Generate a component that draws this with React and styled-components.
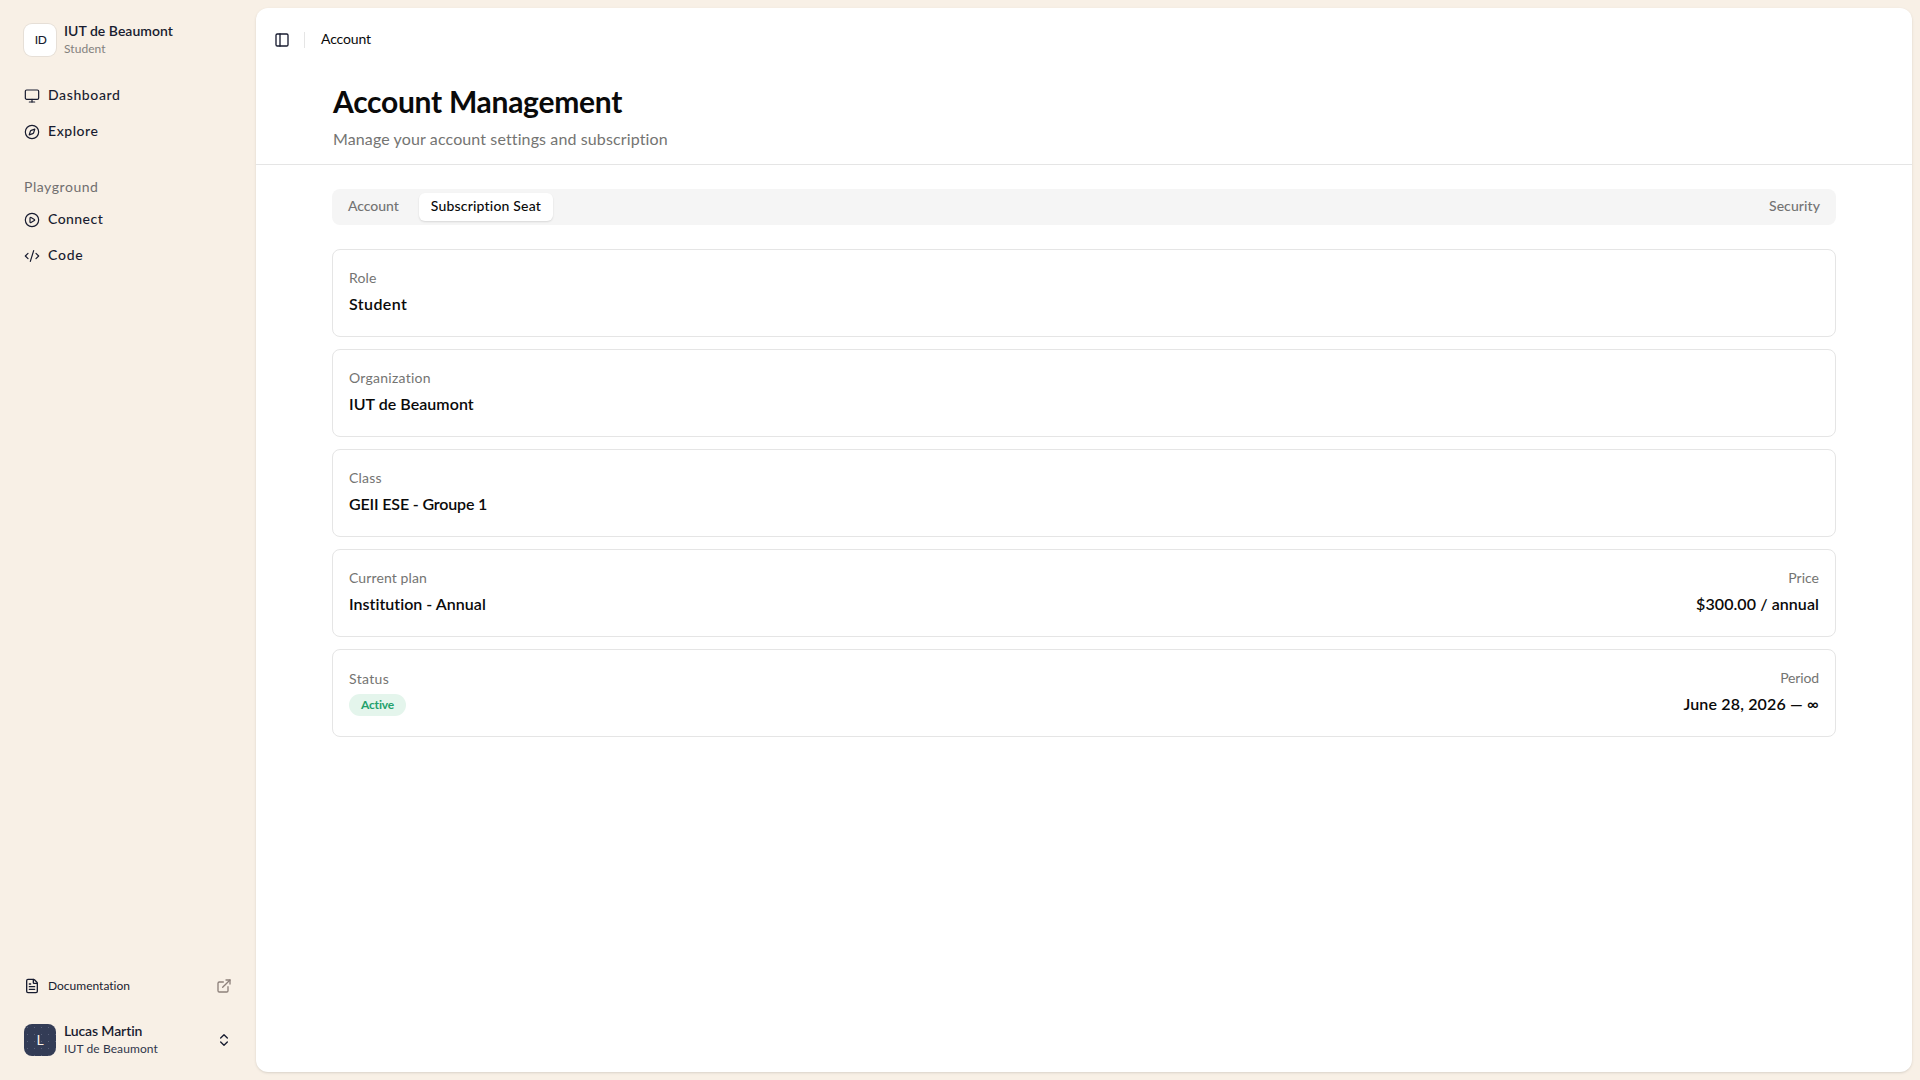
import React from "react";
import styled, { createGlobalStyle } from "styled-components";
import {
  ChevronsUpDown,
  CirclePlay,
  CodeXml,
  Compass,
  ExternalLink,
  FileText,
  Monitor,
  PanelLeft,
} from "lucide-react";

const mainNav = [
  { label: "Dashboard", Icon: Monitor, track: 0.62 },
  { label: "Explore", Icon: Compass, track: 0.55 },
];

const playgroundNav = [
  { label: "Connect", Icon: CirclePlay, track: 0.45 },
  { label: "Code", Icon: CodeXml, track: 0.75 },
];

const rows = [
  [{ label: "Role", value: "Student", labelTrack: 0.15, valueTrack: 0.4 }],
  [{ label: "Organization", value: "IUT de Beaumont", labelTrack: 0.26, valueTrack: 0.05 }],
  [{ label: "Class", value: "GEII ESE - Groupe 1", labelTrack: 0.21, valueTrack: -0.16 }],
  [
    { label: "Current plan", value: "Institution - Annual", labelTrack: 0.12, valueTrack: 0.03 },
    { label: "Price", value: "$300.00 / annual", labelTrack: 0, valueTrack: 0.08 },
  ],
  [
    { label: "Status", badge: "Active", labelTrack: 0.35, valueTrack: -0.16 },
    { label: "Period", value: "June 28, 2026 — ∞", labelTrack: -0.15, valueTrack: 0.16 },
  ],
];

function NavItem({ label, Icon, track }) {
  return (
    <NavLink href="#">
      <Icon size={16} strokeWidth={1.8} />
      <NavText $track={track}>{label}</NavText>
    </NavLink>
  );
}

function Field({ field, end }) {
  return (
    <FieldBox $end={end}>
      <FieldLabel $track={field.labelTrack} $low={!!field.badge}>{field.label}</FieldLabel>
      {field.badge ? (
        <Badge $track={field.valueTrack}>{field.badge}</Badge>
      ) : (
        <FieldValue $track={field.valueTrack}>{field.value}</FieldValue>
      )}
    </FieldBox>
  );
}

export default function App() {
  return (
    <Page>
      <GlobalStyle />
      <Sidebar>
        <Identity>
          <OrgLogo>ID</OrgLogo>
          <IdentityText>
            <Name $track={0.03}>IUT de Beaumont</Name>
            <Detail $muted $track={0.05}>Student</Detail>
          </IdentityText>
        </Identity>

        <Nav>
          {mainNav.map((item) => <NavItem key={item.label} {...item} />)}
        </Nav>

        <NavTitle>Playground</NavTitle>
        <Nav>
          {playgroundNav.map((item) => <NavItem key={item.label} {...item} />)}
        </Nav>

        <SidebarFooter>
          <DocLink href="#">
            <FileText size={16} />
            <span>Documentation</span>
            <ExternalLink size={16} />
          </DocLink>
          <Identity>
            <Avatar>
              <AvatarDots />
              <AvatarLetter>L</AvatarLetter>
            </Avatar>
            <IdentityText>
              <Name $track={-0.12}>Lucas Martin</Name>
              <Detail $track={0.11}>IUT de Beaumont</Detail>
            </IdentityText>
            <ChevronsUpDown size={16} />
          </Identity>
        </SidebarFooter>
      </Sidebar>

      <Main>
        <TopBar>
          <PanelLeft size={16} />
          <Separator />
          <Crumb>Account</Crumb>
        </TopBar>

        <Header>
          <Title>Account Management</Title>
          <Subtitle>Manage your account settings and subscription</Subtitle>
        </Header>

        <Content>
          <Tabs>
            <Tab $track={-0.05}>Account</Tab>
            <Tab $active $track={0.19}>Subscription Seat</Tab>
            <Tab $end $track={0.08}>Security</Tab>
          </Tabs>
          {rows.map((fields) => (
            <Card key={fields[0].label}>
              {fields.map((field, i) => <Field key={field.label} field={field} end={i > 0} />)}
            </Card>
          ))}
        </Content>
      </Main>
    </Page>
  );
}

const GlobalStyle = createGlobalStyle`
* {
  box-sizing: border-box;
}
body {
  margin: 0;
  background: #f8f0e6;
  color: #0a0a0a;
  font-family: Lato, "Liberation Sans", sans-serif;
  font-variant-ligatures: none;
}
`;

const Page = styled.div`
display: flex;
height: 100vh;
background: #f8f0e6;
`;

const Sidebar = styled.aside`
display: flex;
flex: none;
flex-direction: column;
width: 256px;
padding: 16px;
color: #181c30;
`;

const Identity = styled.div`
display: flex;
align-items: center;
gap: 8px;
height: 48px;
padding: 0 8px;

> svg {
  flex: none;
}
`;

const OrgLogo = styled.div`
display: flex;
align-items: center;
justify-content: center;
width: 32px;
height: 32px;
padding: 0 0 1px 1px;
border-radius: 8px;
background: #fff;
box-shadow: 0 0 0 1px #e6dfd7;
font-size: 12px;
font-weight: 500;
letter-spacing: -0.5px;
`;

const IdentityText = styled.div`
display: flex;
flex: 1;
flex-direction: column;
`;

const Name = styled.span`
font-size: 14px;
font-weight: 600;
line-height: 16px;
letter-spacing: ${(p) => p.$track}px;
`;

const Detail = styled.span`
padding-top: 2px;
font-size: 12px;
line-height: 16px;
letter-spacing: ${(p) => p.$track}px;
color: ${(p) => (p.$muted ? "#84817e" : "#30364b")};
`;

const Nav = styled.nav`
display: flex;
flex-direction: column;
gap: 4px;

${Identity} + & {
  margin-top: 16px;
}
`;

const NavLink = styled.a`
display: flex;
align-items: center;
gap: 8px;
height: 32px;
padding: 0 8px;
color: inherit;
text-decoration: none;
`;

const NavText = styled.span`
padding-bottom: 2px;
font-size: 14px;
font-weight: 500;
line-height: 20px;
letter-spacing: ${(p) => p.$track}px;
`;

const NavTitle = styled.div`
height: 32px;
margin-top: 24px;
padding: 0 8px;
color: #716f70;
font-size: 14px;
line-height: 30px;
letter-spacing: 0.55px;
`;

const SidebarFooter = styled.div`
display: flex;
flex-direction: column;
gap: 14px;
margin-top: auto;
`;

const DocLink = styled.a`
display: flex;
align-items: center;
gap: 8px;
height: 32px;
padding: 0 8px;
color: inherit;
font-size: 12px;
text-decoration: none;

span {
  flex: 1;
  padding-bottom: 2px;
}

svg:last-child {
  color: #8d817b;
}
`;

const Avatar = styled.div`
position: relative;
width: 32px;
height: 32px;
border-radius: 8px;
background: #333c56;
overflow: hidden;
`;

const AvatarDots = styled.div`
height: 100%;
background-image: radial-gradient(circle, #59617a 0.6px, transparent 0.9px);
background-size: 7px 7px;
`;

const AvatarLetter = styled.span`
position: absolute;
inset: 0;
color: #f8f0e6;
font-size: 14px;
line-height: 31px;
text-align: center;
`;

const Main = styled.main`
flex: 1;
margin: 8px 8px 8px 0;
border-radius: 12px;
background: #fff;
box-shadow: 0 1px 3px rgba(0, 0, 0, 0.1), 0 1px 2px -1px rgba(0, 0, 0, 0.1);
`;

const TopBar = styled.div`
display: flex;
align-items: center;
height: 64px;
padding-left: 18px;
color: #181c30;
`;

const Separator = styled.div`
width: 1px;
height: 16px;
margin: 0 16px 0 14px;
background: #e5e5e5;
`;

const Crumb = styled.span`
padding-bottom: 3px;
color: #0a0a0a;
font-size: 14px;
letter-spacing: -0.15px;
`;

const Header = styled.header`
height: 93px;
padding: 11px 77px 0;
border-bottom: 1px solid #e5e5e5;
`;

const Title = styled.h1`
margin: 0;
font-size: 30px;
font-weight: 700;
line-height: 36px;
letter-spacing: -0.28px;
`;

const Subtitle = styled.p`
margin: 8px 0 0;
color: #747472;
font-size: 16px;
line-height: 24px;
letter-spacing: 0.12px;
`;

const Content = styled.section`
display: flex;
flex-direction: column;
gap: 12px;
padding: 24px 76px;
`;

const Tabs = styled.div`
display: flex;
align-items: center;
height: 36px;
margin-bottom: 12px;
padding: 4px;
border-radius: 8px;
background: #f5f5f5;
`;

const Tab = styled.button`
height: 28px;
margin-left: ${(p) => (p.$end ? "auto" : p.$active ? "8px" : "0")};
padding: 0 12px 3px;
border: 0;
border-radius: 6px;
background: ${(p) => (p.$active ? "#fff" : "transparent")};
box-shadow: ${(p) => (p.$active ? "0 1px 2px rgba(0, 0, 0, 0.12)" : "none")};
color: ${(p) => (p.$active ? "#0a0a0a" : "#737373")};
font-family: inherit;
font-size: 14px;
font-weight: 500;
letter-spacing: ${(p) => p.$track}px;
`;

const Card = styled.div`
display: flex;
justify-content: space-between;
height: 88px;
padding: 18px 16px;
border: 1px solid #e5e5e5;
border-radius: 8px;
`;

const FieldBox = styled.div`
display: flex;
flex-direction: column;
align-items: ${(p) => (p.$end ? "flex-end" : "flex-start")};
`;

const FieldLabel = styled.span`
padding-top: ${(p) => (p.$low ? "1px" : "0")};
color: #747472;
font-size: 14px;
line-height: 20px;
letter-spacing: ${(p) => p.$track}px;
`;

const FieldValue = styled.span`
margin-top: 4px;
font-size: 16px;
font-weight: 600;
line-height: 24px;
letter-spacing: ${(p) => p.$track}px;
`;

const Badge = styled.span`
width: 57px;
height: 22px;
margin-top: 5px;
border-radius: 11px;
background: #e4f5ec;
color: #22a16b;
font-size: 12px;
font-weight: 700;
line-height: 21px;
text-align: center;
letter-spacing: ${(p) => p.$track}px;
`;
